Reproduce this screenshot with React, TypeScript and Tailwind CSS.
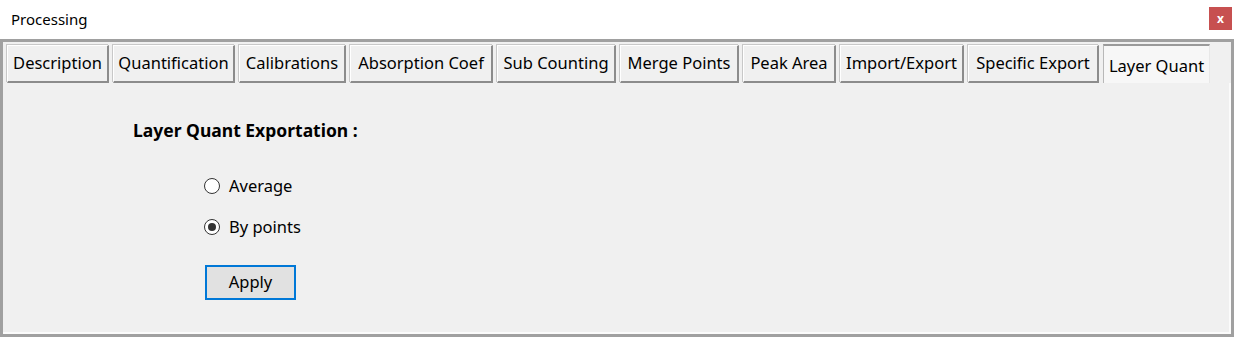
import React from "react";

const tabs: { label: string; w: string }[] = [
  { label: "Description", w: "w-[102px]" },
  { label: "Quantification", w: "w-[122px]" },
  { label: "Calibrations", w: "w-[107px]" },
  { label: "Absorption Coef", w: "w-[143px]" },
  { label: "Sub Counting", w: "w-[119px]" },
  { label: "Merge Points", w: "w-[119px]" },
  { label: "Peak Area", w: "w-[93px]" },
  { label: "Import/Export", w: "w-[124px]" },
  { label: "Specific Export", w: "w-[131px]" },
];

export default function App() {
  return (
    <div
      className="w-[1234px] h-[337px] bg-white flex flex-col text-[#000]"
      style={{ fontFamily: '"Noto Sans", "Open Sans", sans-serif' }}
    >
      {/* title bar */}
      <div className="h-[39px] flex items-center justify-between pl-[11px] pr-[2px]">
        <span className="text-[15px] leading-none -mt-[1px]">Processing</span>
        <div className="w-[23px] h-[23px] bg-[#c75050] flex items-center justify-center text-white text-[12px] font-bold leading-none -mt-[2px]">
          x
        </div>
      </div>
      {/* window body */}
      <div className="flex-1 border-[3px] border-[#a0a0a0] bg-[#f0f0f0] flex flex-col">
        {/* tab strip */}
        <div className="flex gap-[4px] pl-[4px] pt-[2px] h-[41px] items-start">
          {tabs.map((t) => (
            <div
              key={t.label}
              className={`${t.w} h-[38px] mt-[1px] flex items-center justify-center bg-[#f0f0f0] border-t border-l border-t-[#ffffff] border-l-[#ffffff] border-r-2 border-b-2 border-r-[#8c8c8c] border-b-[#8c8c8c] shadow-[-1px_-1px_0_#c8c8c8] text-[16.5px] leading-none whitespace-nowrap`}
            >
              {t.label}
            </div>
          ))}
          <div className="w-[107px] h-[39px] flex items-center justify-center bg-[#f7f7f7] border-t-2 border-l border-t-[#9a9a9a] border-l-[#b8b8b8] border-r border-r-[#e8e8e8] text-[16.5px] leading-none whitespace-nowrap pt-[3px]">
            Layer Quant
          </div>
        </div>
        {/* content */}
        <div className="flex-1 border-r-2 border-b-2 border-r-[#fbfbfb] border-b-[#fbfbfb] flex flex-col">
          <div className="pl-[130px] pt-[39px] text-[17.5px] font-bold leading-none">
            Layer Quant Exportation :
          </div>
          <div className="pl-[201px] pt-[38px] flex flex-col gap-[25px]">
            <label className="flex items-center gap-[9px] text-[16.5px] leading-none">
              <span className="w-[16px] h-[16px] rounded-full border border-[#333] bg-white" />
              Average
            </label>
            <label className="flex items-center gap-[9px] text-[16.5px] leading-none">
              <span className="w-[16px] h-[16px] rounded-full border border-[#333] bg-white flex items-center justify-center">
                <span className="w-[8px] h-[8px] rounded-full bg-[#333]" />
              </span>
              By points
            </label>
          </div>
          <div className="pl-[202px] pt-[29px]">
            <div className="w-[91px] h-[35px] border-2 border-[#0078d7] bg-[#e1e1e1] flex items-center justify-center text-[16.5px] leading-none">
              Apply
            </div>
          </div>
        </div>
      </div>
    </div>
  );
}
